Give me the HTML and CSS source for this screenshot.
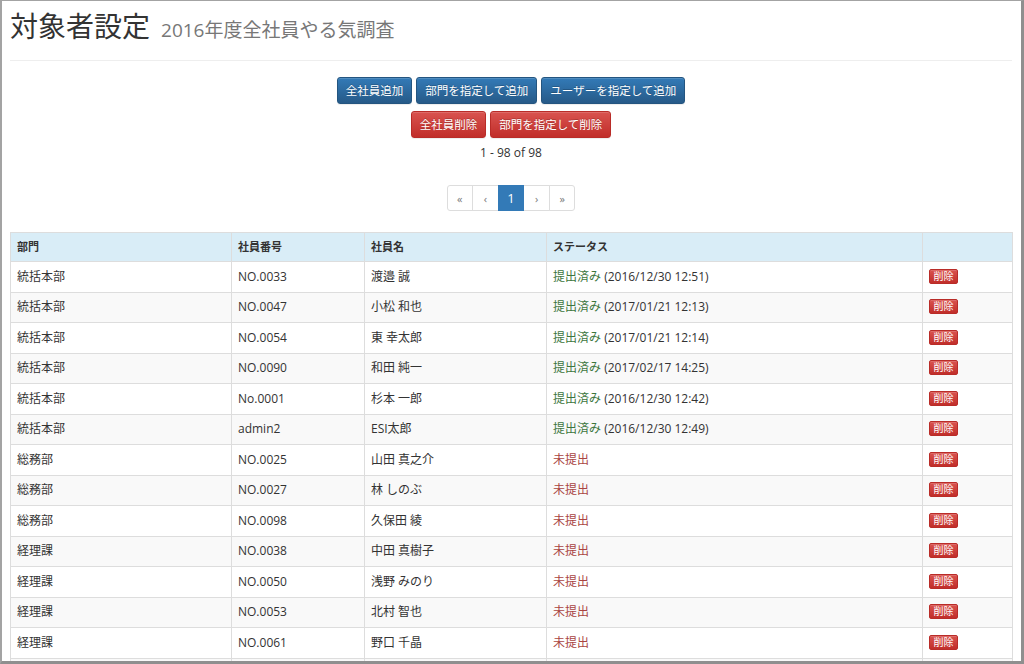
FILE: index.html
```html
<!DOCTYPE html>
<html lang="ja">
<head>
<meta charset="utf-8">
<title>対象者設定</title>
<link rel="stylesheet" href="styles.css">
</head>
<body>
<div class="frame">
  <div class="page-header">
    <h1 class="title">対象者設定</h1>
    <span class="subtitle">2016年度全社員やる気調査</span>
  </div>

  <div class="actions">
    <div class="btn-row">
      <button class="btn btn-primary">全社員追加</button>
      <button class="btn btn-primary">部門を指定して追加</button>
      <button class="btn btn-primary">ユーザーを指定して追加</button>
    </div>
    <div class="btn-row">
      <button class="btn btn-danger">全社員削除</button>
      <button class="btn btn-danger">部門を指定して削除</button>
    </div>
  </div>

  <div class="count">1 - 98 of 98</div>

  <ul class="pagination">
    <li class="page disabled">«</li>
    <li class="page disabled">‹</li>
    <li class="page active">1</li>
    <li class="page disabled">›</li>
    <li class="page disabled">»</li>
  </ul>

  <table class="grid">
    <colgroup>
      <col class="c-dept"><col class="c-no"><col class="c-name"><col class="c-status"><col class="c-act">
    </colgroup>
    <thead>
      <tr><th>部門</th><th>社員番号</th><th>社員名</th><th>ステータス</th><th></th></tr>
    </thead>
    <tbody>
      <tr><td>統括本部</td><td>NO.0033</td><td>渡邉 誠</td><td><span class="ok">提出済み</span> (2016/12/30 12:51)</td><td><button class="btn-del">削除</button></td></tr>
      <tr><td>統括本部</td><td>NO.0047</td><td>小松 和也</td><td><span class="ok">提出済み</span> (2017/01/21 12:13)</td><td><button class="btn-del">削除</button></td></tr>
      <tr><td>統括本部</td><td>NO.0054</td><td>東 幸太郎</td><td><span class="ok">提出済み</span> (2017/01/21 12:14)</td><td><button class="btn-del">削除</button></td></tr>
      <tr><td>統括本部</td><td>NO.0090</td><td>和田 純一</td><td><span class="ok">提出済み</span> (2017/02/17 14:25)</td><td><button class="btn-del">削除</button></td></tr>
      <tr><td>統括本部</td><td>No.0001</td><td>杉本 一郎</td><td><span class="ok">提出済み</span> (2016/12/30 12:42)</td><td><button class="btn-del">削除</button></td></tr>
      <tr><td>統括本部</td><td>admin2</td><td>ESI太郎</td><td><span class="ok">提出済み</span> (2016/12/30 12:49)</td><td><button class="btn-del">削除</button></td></tr>
      <tr><td>総務部</td><td>NO.0025</td><td>山田 真之介</td><td><span class="ng">未提出</span></td><td><button class="btn-del">削除</button></td></tr>
      <tr><td>総務部</td><td>NO.0027</td><td>林 しのぶ</td><td><span class="ng">未提出</span></td><td><button class="btn-del">削除</button></td></tr>
      <tr><td>総務部</td><td>NO.0098</td><td>久保田 綾</td><td><span class="ng">未提出</span></td><td><button class="btn-del">削除</button></td></tr>
      <tr><td>経理課</td><td>NO.0038</td><td>中田 真樹子</td><td><span class="ng">未提出</span></td><td><button class="btn-del">削除</button></td></tr>
      <tr><td>経理課</td><td>NO.0050</td><td>浅野 みのり</td><td><span class="ng">未提出</span></td><td><button class="btn-del">削除</button></td></tr>
      <tr><td>経理課</td><td>NO.0053</td><td>北村 智也</td><td><span class="ng">未提出</span></td><td><button class="btn-del">削除</button></td></tr>
      <tr><td>経理課</td><td>NO.0061</td><td>野口 千晶</td><td><span class="ng">未提出</span></td><td><button class="btn-del">削除</button></td></tr>
      <tr class="cut"><td></td><td></td><td></td><td></td><td></td></tr>
    </tbody>
  </table>
</div>
</body>
</html>
```
FILE: styles.css
```css
html, body {
  margin: 0;
  padding: 0;
  background: #ffffff;
}

body {
  font-family: "Open Sans", "Noto Sans CJK JP", sans-serif;
  color: #333333;
  font-size: 12px;
}

.frame {
  width: 1024px;
  height: 664px;
  box-sizing: border-box;
  overflow: hidden;
  border-style: solid;
  border-color: #a3a3a3 #8f8f8f #8f8f8f #a3a3a3;
  border-width: 1px 3px 3px 2px;
  padding: 0 9px 0 8px;
  background: #ffffff;
}

.page-header {
  display: flex;
  align-items: baseline;
  gap: 11px;
  padding: 9px 0 17px 0;
  border-bottom: 1px solid #eeeeee;
}

.title {
  margin: 0;
  font-size: 28px;
  line-height: 32px;
  font-weight: 400;
  color: #333333;
}

.subtitle {
  font-size: 19px;
  color: #777777;
}

.actions {
  margin-top: 16px;
  display: flex;
  flex-direction: column;
  align-items: center;
  gap: 7px;
}

.btn-row {
  display: flex;
  gap: 4px;
  justify-content: center;
}

.btn {
  font-family: "Open Sans", "Noto Sans CJK JP", sans-serif;
  font-size: 11.5px;
  height: 27px;
  line-height: 25px;
  padding: 0 8px;
  color: #ffffff;
  border-radius: 3px;
  border: 1px solid;
  box-shadow: inset 0 1px 0 rgba(255,255,255,0.15), 0 1px 1px rgba(0,0,0,0.075);
  text-shadow: 0 -1px 0 rgba(0,0,0,0.2);
  cursor: pointer;
}

.btn-primary {
  background: linear-gradient(to bottom, #337ab7 0%, #265a88 100%);
  border-color: #245580;
}

.btn-danger {
  background: linear-gradient(to bottom, #d9534f 0%, #c12e2a 100%);
  border-color: #b92c28;
}

.count {
  margin-top: 6px;
  text-align: center;
  line-height: 17px;
  font-size: 12px;
  color: #333333;
}

.pagination {
  list-style: none;
  margin: 24px 0 0 0;
  padding: 0;
  display: flex;
  justify-content: center;
}

.page {
  width: 26.6px;
  height: 26px;
  box-sizing: border-box;
  border: 1px solid #dddddd;
  margin-left: -1px;
  display: flex;
  align-items: center;
  justify-content: center;
  font-size: 11px;
  color: #777777;
  background: #ffffff;
}

.page:first-child {
  margin-left: 0;
  border-radius: 3px 0 0 3px;
}

.page:last-child {
  border-radius: 0 3px 3px 0;
}

.page.active {
  background: #337ab7;
  border-color: #337ab7;
  color: #ffffff;
  font-size: 13px;
  position: relative;
}

.grid {
  margin-top: 21px;
  width: 100%;
  table-layout: fixed;
  border-collapse: separate;
  border-spacing: 0;
  border-top: 1px solid #dddddd;
  border-left: 1px solid #dddddd;
}

.c-dept { width: 221px; }
.c-no { width: 133px; }
.c-name { width: 182px; }
.c-status { width: 376px; }
.c-act { width: 90px; }

.grid th,
.grid td {
  border-right: 1px solid #dddddd;
  border-bottom: 1px solid #dddddd;
  text-align: left;
  vertical-align: top;
  white-space: nowrap;
}

.grid th {
  background: #d9edf7;
  font-size: 11px;
  font-weight: 700;
  line-height: 17px;
  padding: 5px 6px 6px 6px;
}

.grid td {
  font-size: 12px;
  line-height: 16px;
  height: 16px;
  padding: 6.5px 6px 7px 6px;
}

.grid tbody tr:nth-child(even) td {
  background: #f9f9f9;
}

.ok { color: #3c763d; }
.ng { color: #a94442; }

.btn-del {
  display: block;
  box-sizing: border-box;
  margin-top: 0;
  font-family: "Open Sans", "Noto Sans CJK JP", sans-serif;
  font-size: 10px;
  height: 15px;
  line-height: 13px;
  padding: 0 3.5px;
  color: #ffffff;
  border: 1px solid #b92c28;
  border-radius: 2px;
  background: linear-gradient(to bottom, #d9534f 0%, #c12e2a 100%);
  box-shadow: inset 0 1px 0 rgba(255,255,255,0.15);
  cursor: pointer;
}
```
